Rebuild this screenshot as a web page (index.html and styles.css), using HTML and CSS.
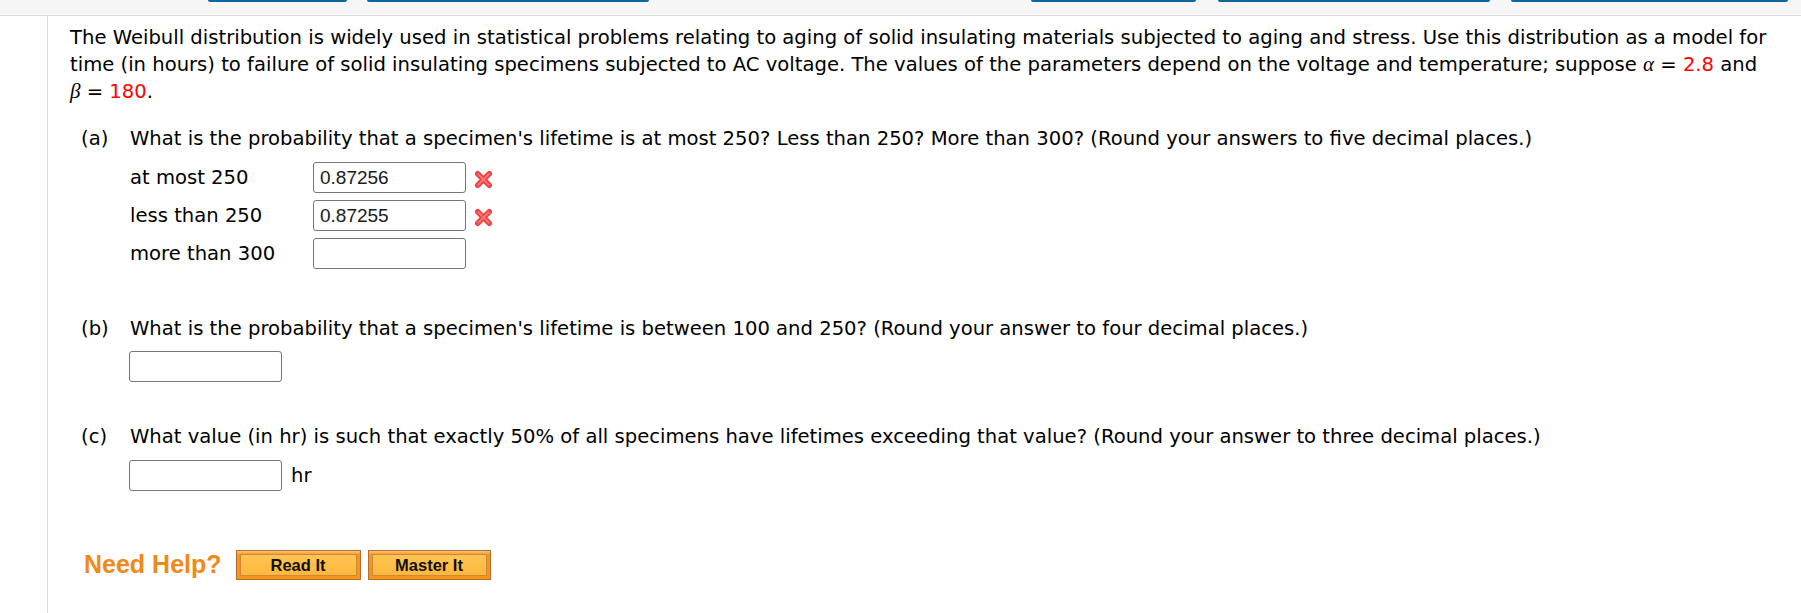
FILE: index.html
```html
<!DOCTYPE html>
<html lang="en">
<head>
<meta charset="utf-8">
<title>Weibull distribution</title>
<link rel="stylesheet" href="styles.css">
</head>
<body>
<div class="topbar">
  <span class="tab tab1"></span>
  <span class="tab tab2"></span>
  <span class="tab tab3"></span>
  <span class="tab tab4"></span>
  <span class="tab tab5"></span>
</div>
<div class="main">
  <div class="gutter"></div>
  <div class="content">
    <p class="intro">The Weibull distribution is widely used in statistical problems relating to aging of solid insulating materials subjected to aging and stress. Use this distribution as a model for time (in hours) to failure of solid insulating specimens subjected to AC voltage. The values of the parameters depend on the voltage and temperature; suppose <span class="expr"><span class="math">α</span> = <span class="val">2.8</span></span> and <span class="expr"><span class="math">β</span> = <span class="val">180</span>.</span></p>

    <div class="part part-a">
      <span class="plabel">(a)</span>
      <div class="pbody">
        <div class="question">What is the probability that a specimen's lifetime is at most 250? Less than 250? More than 300? (Round your answers to five decimal places.)</div>
        <div class="rows">
          <div class="row">
            <span class="rlabel">at most 250</span>
            <input class="answer" type="text" value="0.87256">
            <svg class="wrong" width="19" height="19" viewBox="0 0 18 18" aria-hidden="true">
              <path d="M3.5 3.5 L14.5 14.5 M14.5 3.5 L3.5 14.5" stroke="#ea4848" stroke-width="5.2" stroke-linecap="round"/>
              <path d="M4 4 L14 14 M14 4 L4 14" stroke="#ff7a7a" stroke-width="1.6" stroke-linecap="round"/>
            </svg>
          </div>
          <div class="row">
            <span class="rlabel">less than 250</span>
            <input class="answer" type="text" value="0.87255">
            <svg class="wrong" width="19" height="19" viewBox="0 0 18 18" aria-hidden="true">
              <path d="M3.5 3.5 L14.5 14.5 M14.5 3.5 L3.5 14.5" stroke="#ea4848" stroke-width="5.2" stroke-linecap="round"/>
              <path d="M4 4 L14 14 M14 4 L4 14" stroke="#ff7a7a" stroke-width="1.6" stroke-linecap="round"/>
            </svg>
          </div>
          <div class="row">
            <span class="rlabel">more than 300</span>
            <input class="answer" type="text" value="">
          </div>
        </div>
      </div>
    </div>

    <div class="part part-b">
      <span class="plabel">(b)</span>
      <div class="pbody">
        <div class="question">What is the probability that a specimen's lifetime is between 100 and 250? (Round your answer to four decimal places.)</div>
        <div class="single">
          <input class="answer" type="text" value="">
        </div>
      </div>
    </div>

    <div class="part part-c">
      <span class="plabel">(c)</span>
      <div class="pbody">
        <div class="question">What value (in hr) is such that exactly 50% of all specimens have lifetimes exceeding that value? (Round your answer to three decimal places.)</div>
        <div class="single">
          <input class="answer" type="text" value="">
          <span class="unit">hr</span>
        </div>
      </div>
    </div>

    <div class="help">
      <span class="help-title">Need Help?</span>
      <button class="help-btn btn-read" type="button"><span>Read It</span></button>
      <button class="help-btn btn-master" type="button"><span>Master It</span></button>
    </div>
  </div>
</div>
</body>
</html>
```

FILE: styles.css
```css
html, body {
  margin: 0;
  padding: 0;
  background: #ffffff;
}

body {
  font-family: "DejaVu Sans", Verdana, sans-serif;
  font-size: 19.6px;
  color: #000000;
  height: 613px;
  overflow: hidden;
}

.topbar {
  height: 15px;
  background: #f6f6f6;
  border-bottom: 1px solid #dddddd;
  display: flex;
  align-items: flex-start;
}

.tab {
  display: block;
  height: 2px;
  background: #0b67a0;
  border-radius: 0 0 2px 2px;
}

.tab1 { margin-left: 208px; width: 139px; }
.tab2 { margin-left: 20px; width: 282px; }
.tab3 { margin-left: 382px; width: 165px; }
.tab4 { margin-left: 22px; width: 272px; }
.tab5 { margin-left: 21px; width: 277px; }

.main {
  display: flex;
  height: 597px;
}

.gutter {
  width: 47px;
  flex: none;
  border-right: 1px solid #d9d9d9;
}

.content {
  flex: 1;
  padding: 8px 10px 0 22px;
}

.intro {
  margin: 0;
  line-height: 27px;
}

.expr {
  white-space: nowrap;
}

.math {
  font-family: "Liberation Serif", "Times New Roman", serif;
  font-style: italic;
  font-size: 21px;
  line-height: 1;
}

.val {
  color: #ff0000;
}

.part {
  display: flex;
  margin-left: 11px;
}

.plabel {
  width: 49px;
  flex: none;
  line-height: 27px;
}

.pbody {
  flex: 1;
}

.question {
  line-height: 27px;
}

.part-a { margin-top: 20px; }
.part-b { margin-top: 46px; }
.part-c { margin-top: 41px; }

.rows {
  margin-top: 10px;
  display: flex;
  flex-direction: column;
  gap: 7px;
}

.row {
  display: flex;
  align-items: center;
}

.rlabel {
  width: 183px;
  flex: none;
}

.answer {
  box-sizing: border-box;
  width: 153px;
  height: 31px;
  margin: 0;
  padding: 0 6px;
  border: 1px solid #767676;
  border-radius: 3px;
  background: #ffffff;
  font-family: "Liberation Sans", Arial, sans-serif;
  font-size: 19px;
  color: #1a1a1a;
}

.wrong {
  margin-left: 8px;
  margin-top: 3px;
}

.single {
  margin-top: 9px;
  display: flex;
  align-items: center;
  gap: 9px;
  margin-left: -1px;
}

.part-c .single {
  margin-top: 10px;
}

.unit {
  line-height: 27px;
}

.help {
  margin-top: 59px;
  margin-left: 14px;
  display: flex;
  align-items: center;
}

.help-title {
  font-family: "Liberation Sans", Arial, sans-serif;
  font-weight: bold;
  font-size: 25px;
  color: #ef8a17;
  margin-right: 14px;
  margin-top: -2px;
}

.help-btn {
  box-sizing: border-box;
  height: 30px;
  margin: 0 7px 0 0;
  padding: 3px;
  border: 1px solid #b36f2b;
  background: linear-gradient(#fbc27a 0, #f6941c 4px, #f6941c 100%);
  cursor: pointer;
}

.help-btn span {
  display: block;
  height: 100%;
  box-sizing: border-box;
  border: 1px solid #cf8839;
  background: linear-gradient(#ffc552, #fdb83c);
  font-family: "Liberation Sans", Arial, sans-serif;
  font-weight: bold;
  font-size: 16.5px;
  line-height: 20px;
  color: #111111;
  text-align: center;
}

.btn-read { width: 125px; }
.btn-master { width: 123px; }
```
